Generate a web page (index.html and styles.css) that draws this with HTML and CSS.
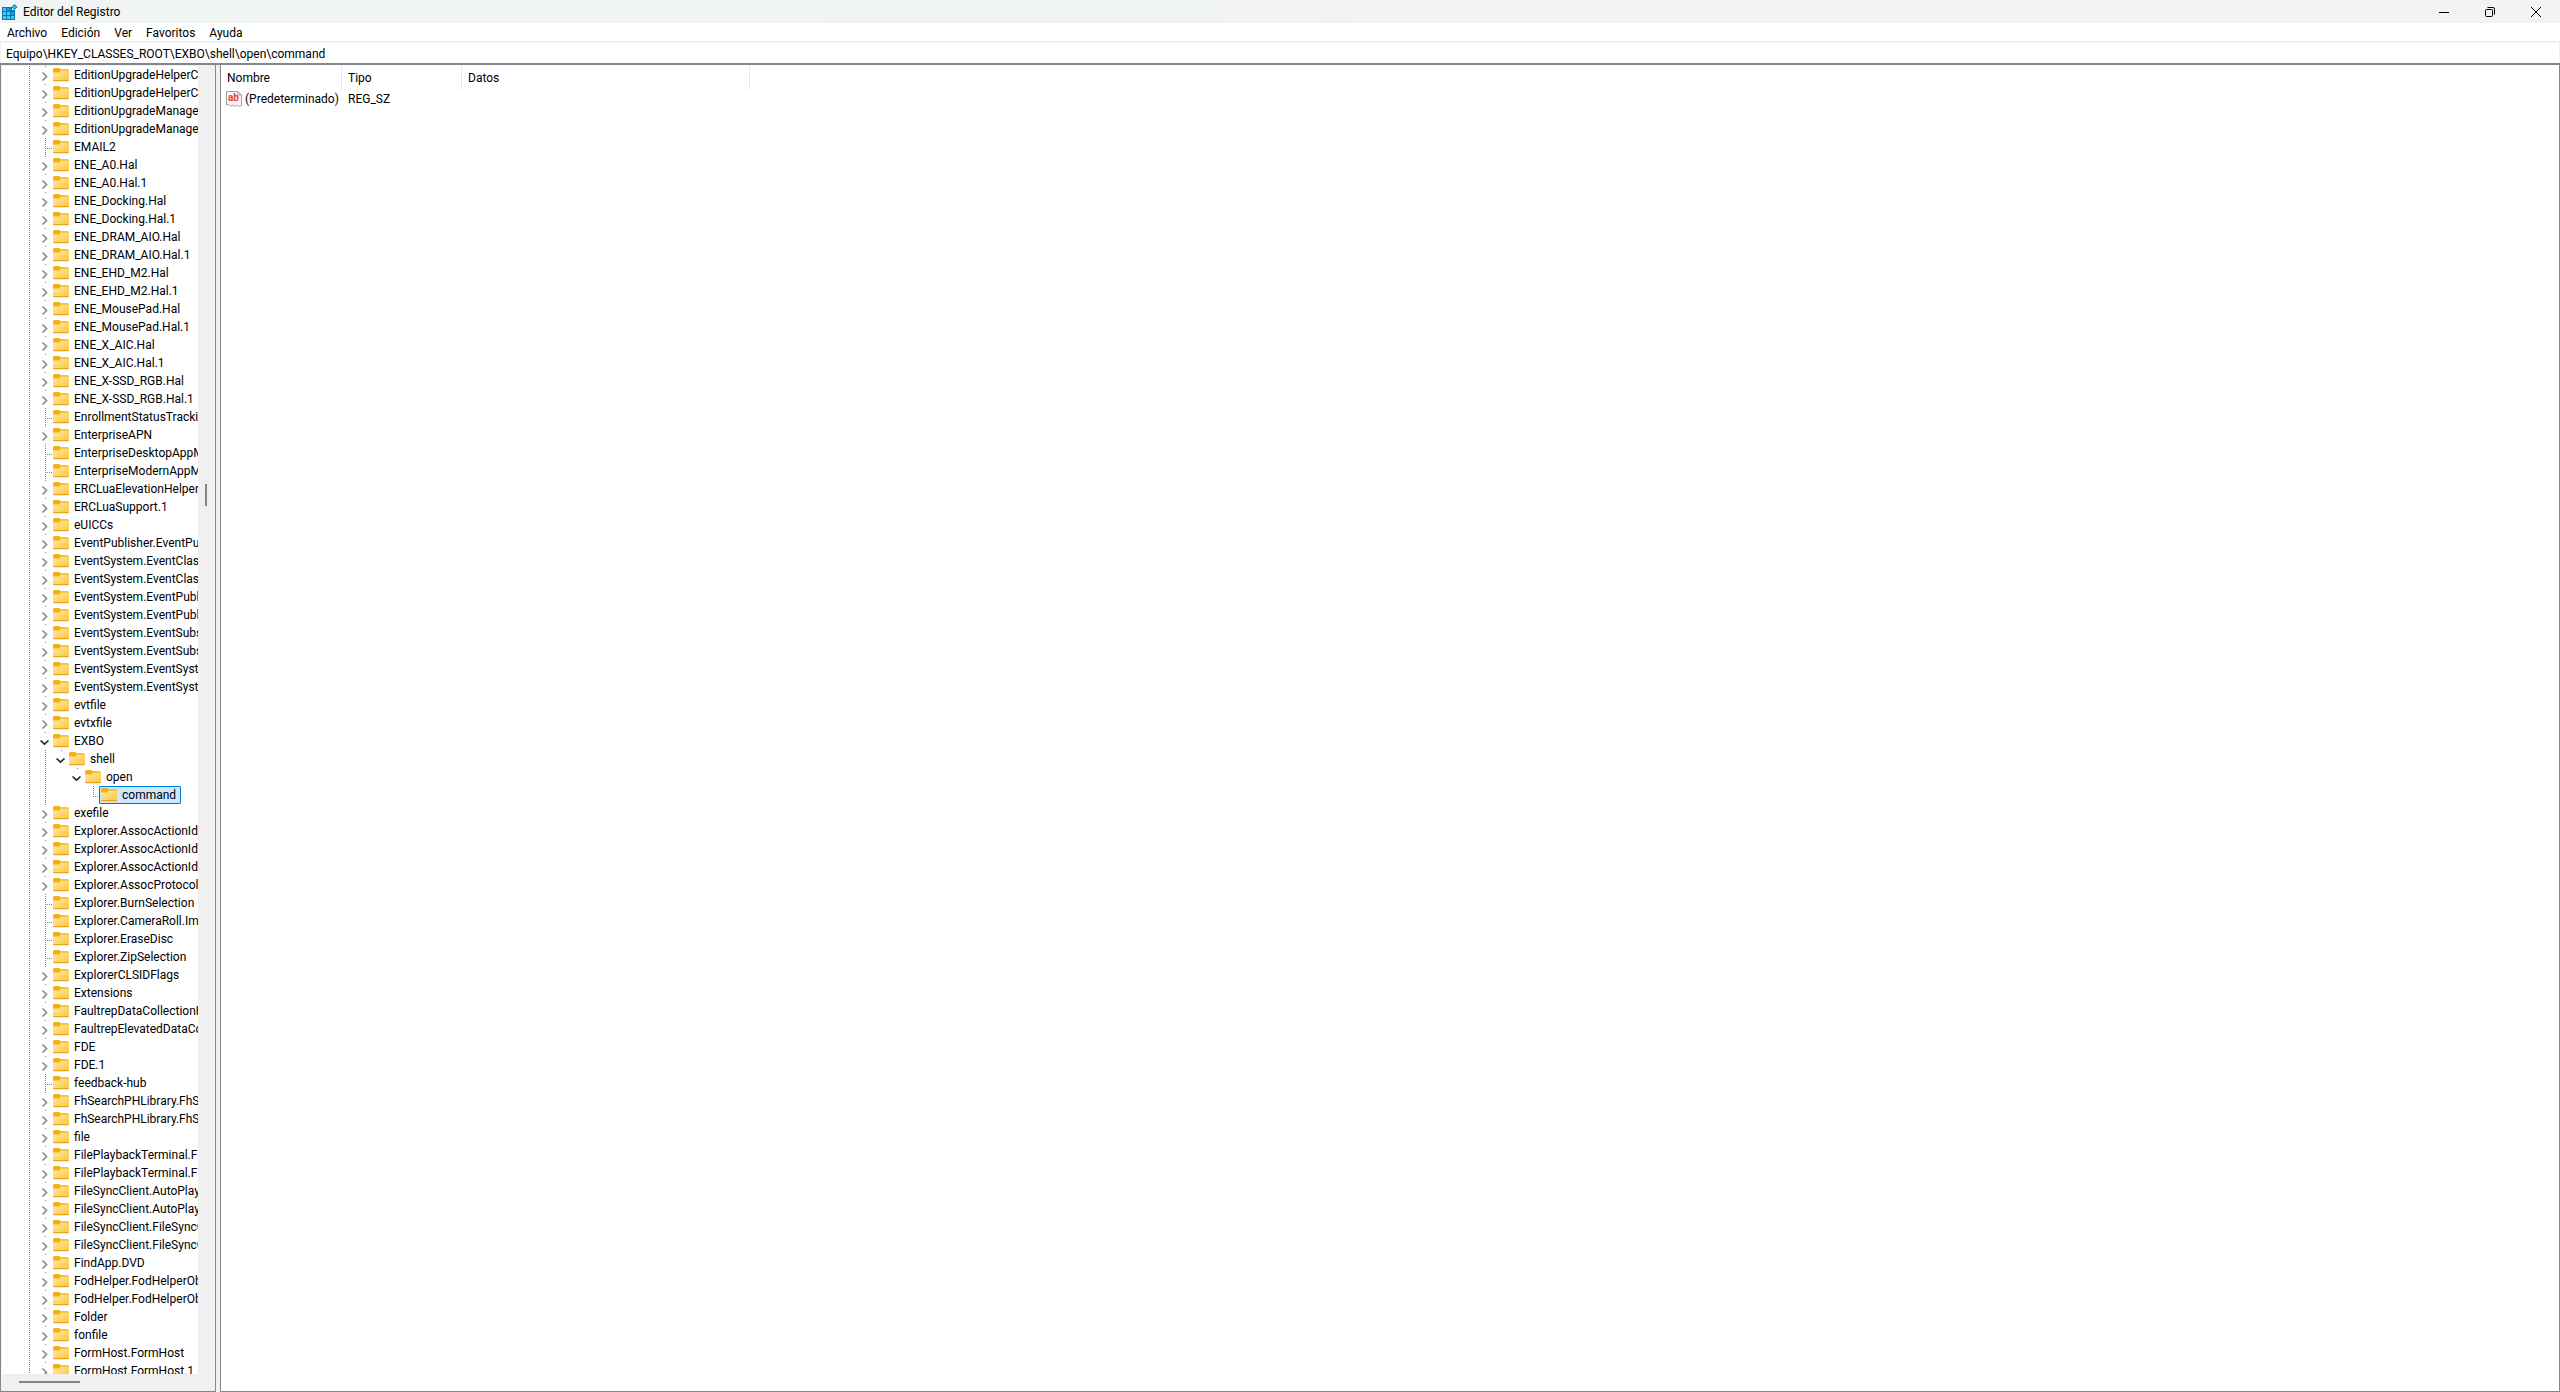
FILE: index.html
```
<!DOCTYPE html>
<html lang="es">
<head>
    <meta charset="utf-8">
    <title>Editor del Registro</title>
    <link rel="stylesheet" href="styles.css">
</head>
<body>
    <svg class="defs" aria-hidden="true">
        <defs>
            <linearGradient id="folderFill" x1="0" y1="0" x2="1" y2="1">
                <stop offset="0" stop-color="#ffe9a6"/>
                <stop offset="1" stop-color="#fdc63c"/>
            </linearGradient>
        </defs>
        <symbol id="folder" viewBox="0 0 16 14">
            <path d="M0 1.500Q0 0 1.500 0H6.200L7.700 1.200H14.500Q16 1.200 16 2.500V6H0Z" fill="#f5b00e"/>
            <path d="M0 4.500H6.500L8 2.500H15.500L16 3V12.500Q16 13 15 13H1Q0 13 0 12.500Z" fill="url(#folderFill)"/>
            <path d="M0 12H16Q16 13.300 14.500 13.300H1.500Q0 13.300 0 12Z" fill="#e9a420"/>
        </symbol>
        <symbol id="closed" viewBox="0 0 16 18">
            <path d="M5.500 6.500L9.500 10.500L5.500 14.500" fill="none" stroke="#8c8c8c" stroke-width="1.700"/>
        </symbol>
        <symbol id="opened" viewBox="0 0 16 18">
            <path d="M3.500 8.500L7.500 12.200L11.500 8.500" fill="none" stroke="#262626" stroke-width="1.700"/>
        </symbol>
    </svg>

    <div class="window">
        <header class="titlebar">
            <svg class="app-icon" viewBox="0 0 16 16" aria-hidden="true">
                <path d="M0 3H10V6H13V16H0Z" fill="#0a76b8"/>
                <path d="M1 4H4V7H1ZM1 8H4V11H1ZM5 8H8V11H5ZM5 12H8V15H5ZM1 12H4V15H1ZM9 12H12V15H9Z" fill="#42c8f5"/>
                <path d="M5 4H8V7H5ZM9 8H12V11H9Z" fill="#1a9ad6"/>
                <path d="M12.500 0L15.500 3L12.500 6L9.500 3Z" fill="#1583c4"/>
                <path d="M12.500 1.500L14 3L12.500 4.500L11 3Z" fill="#42c8f5"/>
            </svg>
            <span class="title">Editor del Registro</span>
            <div class="window-buttons">
                <button aria-label="Minimizar"><svg viewBox="0 0 12 12"><path d="M1 6.500H11"/></svg></button>
                <button aria-label="Restaurar"><svg viewBox="0 0 12 12"><rect x="1.500" y="3.500" width="7" height="7" rx="1"/><path d="M3.500 1.500H9Q10.500 1.500 10.500 3V8.500"/></svg></button>
                <button aria-label="Cerrar"><svg viewBox="0 0 12 12"><path d="M1 1L11 11M11 1L1 11"/></svg></button>
            </div>
        </header>

        <nav class="menu">
            <button>Archivo</button>
            <button>Edición</button>
            <button>Ver</button>
            <button>Favoritos</button>
            <button>Ayuda</button>
        </nav>

        <div class="address">
            <input type="text" aria-label="Ruta de la clave" value="Equipo\HKEY_CLASSES_ROOT\EXBO\shell\open\command">
        </div>

        <main class="panes">
            <section class="tree-pane">
                <div class="tree-row">
                    <ul class="tree" id="tree"></ul>
                    <div class="vscroll"><div class="vthumb"></div></div>
                </div>
                <div class="hscroll"><div class="hthumb"></div></div>
            </section>

            <section class="list-pane">
                <table class="values">
                    <thead>
                        <tr><th class="col-name">Nombre</th><th class="col-type">Tipo</th><th>Datos</th></tr>
                    </thead>
                    <tbody>
                        <tr>
                            <td>
                                <div class="value-name">
                                    <svg viewBox="0 0 16 16" aria-hidden="true">
                                        <path d="M0.500 0.500H12L15.500 4V14.500L13.500 15.500L11.500 14L9 15.500L7 14L4.500 15L2.500 13.500L0.500 14Z" fill="#f7f7f7" stroke="#a0a0a0"/>
                                        <path d="M12 0.500V4H15.500" fill="none" stroke="#a0a0a0"/>
                                        <text x="2" y="10" class="ab">ab</text>
                                    </svg>
                                    (Predeterminado)
                                </div>
                            </td>
                            <td>REG_SZ</td>
                            <td></td>
                        </tr>
                    </tbody>
                </table>
            </section>
        </main>
    </div>
    <script src="tree.js"></script>
</body>
</html>
```
FILE: styles.css
```
* {
    box-sizing: border-box;
}

body {
    margin: 0;
    font-family: Roboto, "Open Sans", sans-serif;
    font-size: 12px;
    line-height: 16px;
    color: #000;
}

button {
    font: inherit;
    color: inherit;
    background: none;
    border: 0;
    padding: 0;
}

.defs {
    position: absolute;
    width: 0;
    height: 0;
}

.window {
    display: flex;
    flex-direction: column;
    height: 100vh;
    background: #f0f0f0;
}

/* title bar */
.titlebar {
    display: flex;
    align-items: center;
    height: 23px;
    padding: 0 1px 0 2px;
    background: linear-gradient(to right, #f0f4f3, #f0f4f1 45%, #f3f3f3 60%);
}

.app-icon {
    width: 16px;
    height: 16px;
}

.title {
    flex: 1;
    padding-left: 5px;
}

.window-buttons {
    display: flex;
}

.window-buttons button {
    width: 46px;
    height: 22px;
    display: flex;
    align-items: center;
    justify-content: center;
}

.window-buttons svg {
    width: 12px;
    height: 12px;
    fill: none;
    stroke: #000;
}

/* menu */
.menu {
    display: flex;
    height: 18px;
    background: #fff;
}

.menu button {
    padding: 2px 7px 0;
}

/* address bar */
.address {
    padding: 2px 1px 0;
    border-bottom: 2px solid #828790;
}

.address input {
    display: block;
    width: 100%;
    height: 20px;
    padding: 1px 5px 0;
    border: 0;
    font: inherit;
    background: #fff;
}

/* panes */
.panes {
    flex: 1;
    min-height: 0;
    display: flex;
    gap: 4px;
}

.tree-pane {
    width: 216px;
    display: flex;
    flex-direction: column;
    padding: 1px;
    border: 1px solid #828790;
    border-top: 0;
}

.tree-row {
    flex: 1;
    min-height: 0;
    display: flex;
    background: #fff;
}

.tree {
    flex: 1;
    min-width: 0;
    margin: 0;
    padding: 0 0 0 19px;
    overflow: hidden;
    list-style: none;
    background: #fff;
}

.tree li {
    display: flex;
    height: 18px;
    white-space: nowrap;
}

.tree svg {
    display: block;
    flex: none;
}

.guide,
.toggle,
.branch {
    flex: none;
    width: 16px;
    height: 18px;
}

.line {
    background: repeating-linear-gradient(#808080 0 1px, transparent 1px 2px) 8px 0 / 1px 100% no-repeat;
}

.toggle {
    background: linear-gradient(#808080, #808080) 8px 0 / 1px 1px no-repeat;
}

.toggle svg {
    width: 16px;
    height: 18px;
}

.branch {
    background:
        repeating-linear-gradient(#808080 0 1px, transparent 1px 2px) 8px 0 / 1px 100% no-repeat,
        repeating-linear-gradient(to right, #808080 0 1px, transparent 1px 2px) 8px 10px / 7px 1px no-repeat;
}

.branch.last {
    background-size: 1px 11px, 7px 1px;
}

.key {
    display: flex;
    align-items: center;
    gap: 5px;
    margin-left: -2px;
    padding: 0 4px 0 1px;
    border: 1px solid transparent;
    border-radius: 1px;
}

.key svg {
    width: 16px;
    height: 14px;
}

.key.selected {
    border-color: #0078d7;
    background: #cce8ff;
}

.vscroll {
    width: 16px;
    background: #f0f0f0;
}

.vthumb {
    width: 2px;
    height: 22px;
    margin: 418px auto 0;
    background: #858585;
}

.hscroll {
    height: 16px;
    padding: 7px 17px;
    background: #f0f0f0;
}

.hthumb {
    width: 61px;
    height: 2px;
    background: #858585;
}

.list-pane {
    flex: 1;
    padding-top: 1px;
    border: 1px solid #828790;
    border-top: 0;
    background: #fff;
}

.values {
    table-layout: fixed;
    width: 529px;
    border-spacing: 0;
}

.values th {
    height: 24px;
    padding: 0 6px;
    text-align: left;
    font-weight: normal;
    border-right: 1px solid #e5e5e5;
}

.values td {
    height: 18px;
    padding: 0 6px;
    white-space: nowrap;
}

.values td:first-child {
    padding-left: 5px;
    padding-right: 0;
}

.col-name {
    width: 121px;
}

.col-type {
    width: 120px;
}

.value-name {
    display: flex;
    align-items: center;
    gap: 3px;
}

.value-name svg {
    flex: none;
    width: 16px;
    height: 16px;
}

.ab {
    font-size: 10px;
    font-weight: bold;
    fill: #d9492b;
}
```
FILE: tree.js
```
// "+" closed key, "-" open key, "." key without children
var keys = [
    "+EditionUpgradeHelperClass", "+EditionUpgradeHelperClass.1",
    "+EditionUpgradeManagerClass", "+EditionUpgradeManagerClass.1",
    ".EMAIL2", "+ENE_A0.Hal", "+ENE_A0.Hal.1", "+ENE_Docking.Hal", "+ENE_Docking.Hal.1",
    "+ENE_DRAM_AIO.Hal", "+ENE_DRAM_AIO.Hal.1", "+ENE_EHD_M2.Hal", "+ENE_EHD_M2.Hal.1",
    "+ENE_MousePad.Hal", "+ENE_MousePad.Hal.1", "+ENE_X_AIC.Hal", "+ENE_X_AIC.Hal.1",
    "+ENE_X-SSD_RGB.Hal", "+ENE_X-SSD_RGB.Hal.1", ".EnrollmentStatusTracking",
    "+EnterpriseAPN", ".EnterpriseDesktopAppManagement", ".EnterpriseModernAppManagement",
    "+ERCLuaElevationHelper", "+ERCLuaSupport.1", "+eUICCs", "+EventPublisher.EventPublisher",
    "+EventSystem.EventClass", "+EventSystem.EventClass.1",
    "+EventSystem.EventPublisher", "+EventSystem.EventPublisher.1",
    "+EventSystem.EventSubscription", "+EventSystem.EventSubscription.1",
    "+EventSystem.EventSystem", "+EventSystem.EventSystem.1",
    "+evtfile", "+evtxfile", "-EXBO", "-shell", "-open", ".command",
    "+exefile", "+Explorer.AssocActionId.Burn", "+Explorer.AssocActionId.Erase",
    "+Explorer.AssocActionId.Zip", "+Explorer.AssocProtocol.search",
    ".Explorer.BurnSelection", ".Explorer.CameraRoll.Import", ".Explorer.EraseDisc",
    ".Explorer.ZipSelection", "+ExplorerCLSIDFlags", "+Extensions",
    "+FaultrepDataCollectionHandler", "+FaultrepElevatedDataCollection", "+FDE", "+FDE.1",
    ".feedback-hub", "+FhSearchPHLibrary.FhSearch", "+FhSearchPHLibrary.FhSearch.1", "+file",
    "+FilePlaybackTerminal.File", "+FilePlaybackTerminal.File.1",
    "+FileSyncClient.AutoPlayHandler", "+FileSyncClient.AutoPlayHandler.1",
    "+FileSyncClient.FileSyncClient", "+FileSyncClient.FileSyncClient.1",
    "+FindApp.DVD", "+FodHelper.FodHelperObject", "+FodHelper.FodHelperObject.1",
    "+Folder", "+fonfile", "+FormHost.FormHost", "+FormHost.FormHost.1"
];

// guides drawn before the keys below EXBO
var line = '<span class="guide line"></span>';
var blank = '<span class="guide"></span>';
var guides = {
    shell: line + line,
    open: line + line + blank,
    command: line + line + blank + blank
};

function use(id) {
    return '<svg aria-hidden="true"><use href="#' + id + '"/></svg>';
}

var html = "";
keys.forEach(function (entry) {
    var state = entry[0];
    var name = entry.slice(1);
    var selected = name == "command";

    html += "<li>" + (guides[name] || line);
    if (state == ".") {
        html += '<span class="branch' + (selected ? " last" : "") + '"></span>';
    } else {
        html += '<button class="toggle" aria-label="' + name + '">' + use(state == "+" ? "closed" : "opened") + "</button>";
    }
    html += '<span class="key' + (selected ? " selected" : "") + '">' + use("folder") + name + "</span></li>";
});
document.getElementById("tree").innerHTML = html;
```
